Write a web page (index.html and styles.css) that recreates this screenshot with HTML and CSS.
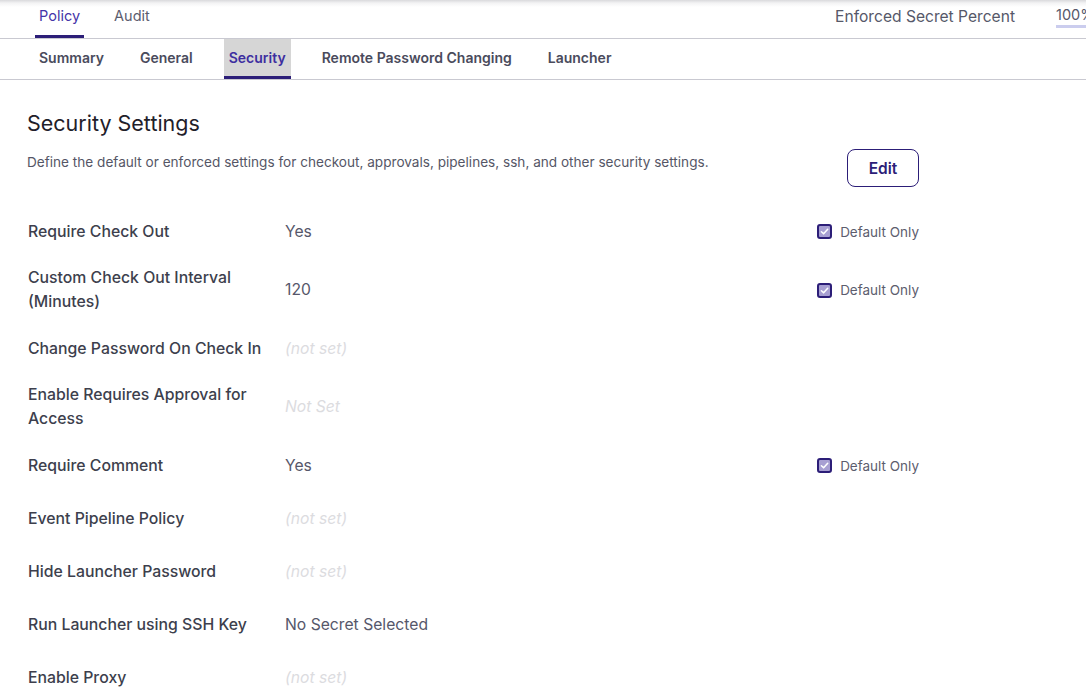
FILE: index.html
```html
<!DOCTYPE html>
<html lang="en">
<head>
<meta charset="utf-8">
<title>Security Settings</title>
<link rel="stylesheet" href="styles.css">
</head>
<body>
<div class="page">
  <header class="topbar">
    <nav class="maintabs">
      <a class="maintab active">Policy</a>
      <a class="maintab">Audit</a>
    </nav>
    <div class="enforced">
      <span class="enf-label">Enforced Secret Percent</span>
      <span class="enf-value">100%</span>
    </div>
  </header>
  <nav class="subtabs">
    <a class="subtab">Summary</a>
    <a class="subtab">General</a>
    <a class="subtab active">Security</a>
    <a class="subtab">Remote Password Changing</a>
    <a class="subtab">Launcher</a>
  </nav>
  <main class="content">
    <h1 class="title">Security Settings</h1>
    <div class="intro">
      <p class="desc">Define the default or enforced settings for checkout, approvals, pipelines, ssh, and other security settings.</p>
      <button class="edit">Edit</button>
    </div>
    <div class="rows">
      <div class="row">
        <div class="label">Require Check Out</div>
        <div class="value">Yes</div>
        <div class="flag"><span class="cb"><svg viewBox="0 0 10 10"><path d="M2.2 5.2 L4.2 7.1 L7.9 3" /></svg></span>Default Only</div>
      </div>
      <div class="row">
        <div class="label">Custom Check Out Interval (Minutes)</div>
        <div class="value">120</div>
        <div class="flag"><span class="cb"><svg viewBox="0 0 10 10"><path d="M2.2 5.2 L4.2 7.1 L7.9 3" /></svg></span>Default Only</div>
      </div>
      <div class="row">
        <div class="label">Change Password On Check In</div>
        <div class="value unset">(not set)</div>
      </div>
      <div class="row">
        <div class="label">Enable Requires Approval for Access</div>
        <div class="value unset">Not Set</div>
      </div>
      <div class="row">
        <div class="label">Require Comment</div>
        <div class="value">Yes</div>
        <div class="flag"><span class="cb"><svg viewBox="0 0 10 10"><path d="M2.2 5.2 L4.2 7.1 L7.9 3" /></svg></span>Default Only</div>
      </div>
      <div class="row">
        <div class="label">Event Pipeline Policy</div>
        <div class="value unset">(not set)</div>
      </div>
      <div class="row">
        <div class="label">Hide Launcher Password</div>
        <div class="value unset">(not set)</div>
      </div>
      <div class="row">
        <div class="label">Run Launcher using SSH Key</div>
        <div class="value">No Secret Selected</div>
      </div>
      <div class="row">
        <div class="label">Enable Proxy</div>
        <div class="value unset">(not set)</div>
      </div>
    </div>
  </main>
</div>
</body>
</html>
```

FILE: styles.css
```css
* { box-sizing: border-box; }
html, body {
  margin: 0;
  padding: 0;
  background: #fff;
  overflow: hidden;
}
body {
  font-family: Inter, "Noto Sans", sans-serif;
  color: #3d3f4d;
  width: 1086px;
  height: 693px;
}
.page {
  background: linear-gradient(to bottom, #d9d9dc 0px, #f3f3f4 3px, #fff 7px);
}
.topbar {
  height: 39px;
  border-bottom: 1px solid #c9c9d1;
  display: flex;
  justify-content: space-between;
  align-items: stretch;
  padding-left: 35px;
  overflow: hidden;
}
.maintabs {
  display: flex;
  gap: 26px;
}
.maintab {
  padding: 6px 4px 0;
  font-size: 14.5px;
  color: #5c5d6e;
  border-bottom: 3px solid transparent;
  line-height: 20px;
}
.maintab.active {
  color: #4434a8;
  border-bottom-color: #2c1e78;
}
.enforced {
  display: flex;
  align-items: flex-start;
  gap: 40px;
  padding-top: 6px;
  margin-right: -30px;
}
.enf-label {
  font-size: 15.6px;
  color: #565869;
  line-height: 22px;
  margin-right: 1px;
}
.enf-value {
  font-size: 14.5px;
  color: #565869;
  line-height: 17px;
  width: 60px;
  border-bottom: 3px solid #cbcdee;
  padding-bottom: 2px;
}
.subtabs {
  height: 41px;
  border-bottom: 1px solid #c9c9d1;
  display: flex;
  gap: 26px;
  padding-left: 34px;
}
.subtab {
  padding: 0 5px;
  font-size: 14px;
  font-weight: 600;
  color: #4a4b5c;
  display: flex;
  align-items: center;
  border-bottom: 3px solid transparent;
}
.subtab.active {
  background: #d6d6d6;
  color: #3d2ea0;
  border-bottom-color: #2c1e78;
}
.content {
  padding: 0 0 0 27px;
  width: 919px;
}
.title {
  margin: 29px 0 0;
  font-size: 21.5px;
  font-weight: 400;
  color: #1f2029;
  line-height: 28px;
}
.intro {
  display: flex;
  justify-content: space-between;
  align-items: flex-start;
  margin-top: 11px;
}
.desc {
  margin: 5px 0 0;
  font-size: 13.6px;
  color: #555666;
  line-height: 18px;
}
.edit {
  width: 72px;
  height: 38px;
  border: 1.5px solid #2c1e78;
  border-radius: 8px;
  background: #fff;
  color: #2c1e78;
  font-family: Inter, "Noto Sans", sans-serif;
  font-size: 15.5px;
  font-weight: 600;
  padding: 0;
  margin-top: 1px;
}
.rows {
  margin-top: 26px;
  display: flex;
  flex-direction: column;
  gap: 16px;
}
.row {
  display: flex;
  align-items: center;
  min-height: 37px;
}
.label {
  width: 258px;
  padding-left: 1px;
  padding-right: 20px;
  font-size: 15.8px;
  font-weight: 500;
  color: #3d3f4d;
  line-height: 24px;
}
.value {
  flex: 1;
  font-size: 15.7px;
  color: #56576a;
  line-height: 24px;
}
.value.unset {
  font-style: italic;
  color: #dcdcdf;
}
.flag {
  display: flex;
  align-items: center;
  gap: 8px;
  font-size: 13.5px;
  color: #5c5d6e;
}
.cb {
  width: 15px;
  height: 15px;
  border: 2px solid #2c1e78;
  border-radius: 3px;
  background: #a79fd2;
  display: flex;
  align-items: center;
  justify-content: center;
}
.cb svg {
  width: 11px;
  height: 11px;
  fill: none;
  stroke: #fff;
  stroke-width: 1.4;
  stroke-linecap: round;
  stroke-linejoin: round;
}
```
